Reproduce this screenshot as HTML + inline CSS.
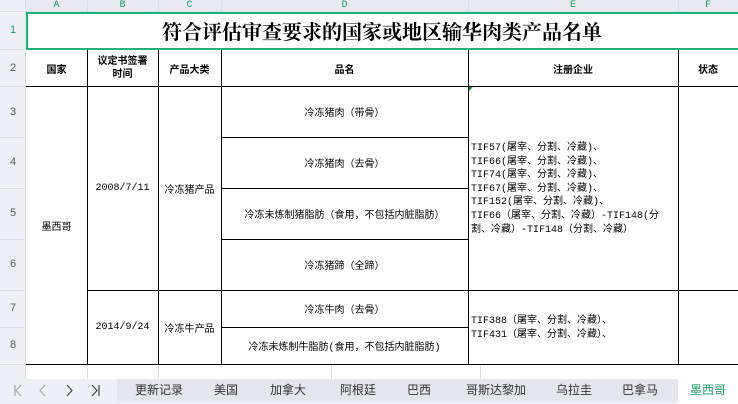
<!DOCTYPE html>
<html><head><meta charset="utf-8"><style>
*{margin:0;padding:0;box-sizing:border-box}
body{width:738px;height:404px;overflow:hidden;background:#fff;position:relative;font-family:"Liberation Sans","Noto Sans CJK SC",sans-serif}
.a{position:absolute}
.hl{position:absolute;height:1px;background:#000}
.vl{position:absolute;width:1px;background:#000}
.gl{position:absolute;background:#d8dde6}
.ch{position:absolute;top:0;height:12px;font-size:10px;line-height:12px;color:#1a9a66;text-align:center;font-family:"Liberation Mono",monospace}
.rh{position:absolute;left:0;width:26px;font-size:11px;color:#555;text-align:center;font-family:"Liberation Sans",sans-serif}
.c{position:absolute;display:flex;align-items:center;justify-content:center;text-align:center;font-size:10px;color:#000;font-family:"Liberation Mono","Noto Sans CJK SC",monospace}
.b{font-weight:bold;font-family:"Liberation Sans","Noto Sans CJK SC",sans-serif}
.tab{position:absolute;top:379px;height:22px;line-height:22px;font-size:12px;color:#333;text-align:center}
</style></head><body>
<div class="a" style="left:0;top:0;width:738px;height:12px;background:#e8eaee"></div>
<div class="a" style="left:0;top:0;width:26px;height:379px;background:#eef0f4"></div>
<div class="gl" style="left:25px;top:0;width:1px;height:379px"></div>
<div class="gl" style="left:0;top:11px;width:738px;height:1px"></div>
<div class="ch" style="left:26px;width:61px">A</div>
<div class="ch" style="left:87px;width:71px">B</div>
<div class="ch" style="left:158px;width:63px">C</div>
<div class="ch" style="left:221px;width:247px">D</div>
<div class="ch" style="left:468px;width:210px">E</div>
<div class="ch" style="left:678px;width:60px">F</div>
<div class="gl" style="left:87px;top:0;width:1px;height:12px"></div>
<div class="gl" style="left:158px;top:0;width:1px;height:12px"></div>
<div class="gl" style="left:221px;top:0;width:1px;height:12px"></div>
<div class="gl" style="left:468px;top:0;width:1px;height:12px"></div>
<div class="gl" style="left:678px;top:0;width:1px;height:12px"></div>
<div class="rh" style="top:12px;height:37px;line-height:37px;color:#1a9a66">1</div>
<div class="rh" style="top:49px;height:38px;line-height:38px">2</div>
<div class="rh" style="top:87px;height:50px;line-height:50px">3</div>
<div class="rh" style="top:137px;height:51px;line-height:51px">4</div>
<div class="rh" style="top:188px;height:51px;line-height:51px">5</div>
<div class="rh" style="top:239px;height:51px;line-height:51px">6</div>
<div class="rh" style="top:290px;height:37px;line-height:37px">7</div>
<div class="rh" style="top:327px;height:37px;line-height:37px">8</div>
<div class="gl" style="left:0;top:49px;width:26px;height:1px"></div>
<div class="gl" style="left:0;top:86px;width:26px;height:1px"></div>
<div class="gl" style="left:0;top:137px;width:26px;height:1px"></div>
<div class="gl" style="left:0;top:188px;width:26px;height:1px"></div>
<div class="gl" style="left:0;top:239px;width:26px;height:1px"></div>
<div class="gl" style="left:0;top:290px;width:26px;height:1px"></div>
<div class="gl" style="left:0;top:327px;width:26px;height:1px"></div>
<div class="gl" style="left:0;top:364px;width:26px;height:1px"></div>
<div class="gl" style="left:87px;top:365px;width:1px;height:14px"></div>
<div class="gl" style="left:158px;top:365px;width:1px;height:14px"></div>
<div class="gl" style="left:331px;top:365px;width:1px;height:14px"></div>
<div class="gl" style="left:480px;top:365px;width:1px;height:14px"></div>
<div class="a" style="left:26px;top:12px;width:712px;height:38px;border:2px solid #21b17a;border-right:none"></div>
<div class="a" style="left:26px;top:14px;width:712px;height:34px;line-height:34px;text-align:center;font-size:20px;font-weight:bold;font-family:'Noto Serif CJK SC',serif">符合评估审查要求的国家或地区输华肉类产品名单</div>
<div class="hl" style="left:26px;top:86px;width:712px"></div>
<div class="hl" style="left:221px;top:137px;width:247px"></div>
<div class="hl" style="left:221px;top:188px;width:247px"></div>
<div class="hl" style="left:221px;top:239px;width:247px"></div>
<div class="hl" style="left:87px;top:290px;width:651px"></div>
<div class="hl" style="left:221px;top:327px;width:247px"></div>
<div class="hl" style="left:26px;top:364px;width:712px"></div>
<div class="vl" style="left:87px;top:50px;height:315px"></div>
<div class="vl" style="left:158px;top:50px;height:315px"></div>
<div class="vl" style="left:221px;top:50px;height:315px"></div>
<div class="vl" style="left:468px;top:50px;height:315px"></div>
<div class="vl" style="left:678px;top:50px;height:315px"></div>
<div class="a" style="left:469px;top:87px;width:0;height:0;border-top:4px solid #1a8a3a;border-right:4px solid transparent"></div>
<div class="c b" style="left:26px;top:50px;width:61px;height:36px">国家</div>
<div class="c b" style="left:87px;top:50px;width:71px;height:36px;line-height:13px">议定书签署<br>时间</div>
<div class="c b" style="left:158px;top:50px;width:63px;height:36px">产品大类</div>
<div class="c b" style="left:221px;top:50px;width:247px;height:36px">品名</div>
<div class="c b" style="left:468px;top:50px;width:210px;height:36px">注册企业</div>
<div class="c b" style="left:678px;top:50px;width:60px;height:36px">状态</div>
<div class="c" style="left:26px;top:87px;width:61px;height:277px">墨西哥</div>
<div class="c" style="left:87px;top:87px;width:71px;height:203px">2008/7/11</div>
<div class="c" style="left:158px;top:87px;width:63px;height:203px">冷冻猪产品</div>
<div class="c" style="left:87px;top:291px;width:71px;height:73px">2014/9/24</div>
<div class="c" style="left:158px;top:291px;width:63px;height:73px">冷冻牛产品</div>
<div class="c" style="left:221px;top:87px;width:247px;height:50px">冷冻猪肉（带骨）</div>
<div class="c" style="left:221px;top:138px;width:247px;height:50px">冷冻猪肉（去骨）</div>
<div class="c" style="left:221px;top:189px;width:247px;height:50px">冷冻未炼制猪脂肪（食用，不包括内脏脂肪）</div>
<div class="c" style="left:221px;top:240px;width:247px;height:50px">冷冻猪蹄（全蹄）</div>
<div class="c" style="left:221px;top:291px;width:247px;height:36px">冷冻牛肉（去骨）</div>
<div class="c" style="left:221px;top:328px;width:247px;height:36px">冷冻未炼制牛脂肪(食用，不包括内脏脂肪)</div>
<div class="a" style="left:471px;top:142px;width:205px;font-size:10px;line-height:13.6px;font-family:'Liberation Mono','Noto Sans CJK SC',monospace">TIF57(屠宰、分割、冷藏)、<br>TIF66(屠宰、分割、冷藏)、<br>TIF74(屠宰、分割、冷藏)、<br>TIF67(屠宰、分割、冷藏)、<br>TIF152(屠宰、分割、冷藏)、<br>TIF66（屠宰、分割、冷藏）-TIF148(分割、冷藏）-TIF148（分割、冷藏）</div>
<div class="a" style="left:471px;top:315px;width:205px;font-size:10px;line-height:13.6px;font-family:'Liberation Mono','Noto Sans CJK SC',monospace">TIF388（屠宰、分割、冷藏）、<br>TIF431（屠宰、分割、冷藏）、</div>
<div class="a" style="left:0;top:379px;width:738px;height:25px;background:#e4e6eb"></div>
<div class="a" style="left:0;top:379px;width:117px;height:22px;background:#eef0f4"></div>
<div class="a" style="left:0;top:401px;width:738px;height:3px;background:#eef0f4"></div>
<svg class="a" style="left:0;top:379px" width="117" height="22" fill="none" stroke-width="1.2">
<path d="M15 6v11M21 6l-5 5.5 5 5.5" stroke="#aaa"/>
<path d="M45 6l-5 5.5 5 5.5" stroke="#aaa"/>
<path d="M67 6l5 5.5-5 5.5" stroke="#444"/>
<path d="M92 6l5 5.5-5 5.5M99 6v11" stroke="#444"/>
</svg>
<div class="tab" style="left:128px;width:62px">更新记录</div>
<div class="tab" style="left:205px;width:42px">美国</div>
<div class="tab" style="left:262px;width:52px">加拿大</div>
<div class="tab" style="left:330px;width:56px">阿根廷</div>
<div class="tab" style="left:398px;width:42px">巴西</div>
<div class="tab" style="left:455px;width:82px">哥斯达黎加</div>
<div class="tab" style="left:547px;width:54px">乌拉圭</div>
<div class="tab" style="left:612px;width:56px">巴拿马</div>
<div class="tab" style="left:678px;width:60px;background:#fff;color:#1a9a66;height:25px">墨西哥</div>
</body></html>
